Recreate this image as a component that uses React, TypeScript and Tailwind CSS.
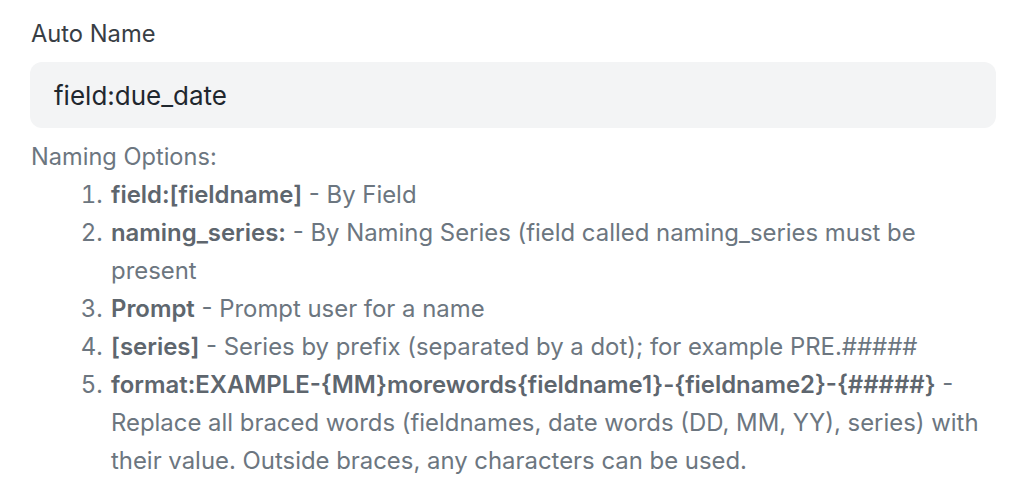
export default function App() {
  const options = [
    { key: 'field:[fieldname]', text: 'By Field' },
    { key: 'naming_series:', text: 'By Naming Series (field called naming_series must be present' },
    { key: 'Prompt', text: 'Prompt user for a name' },
    { key: '[series]', text: 'Series by prefix (separated by a dot); for example PRE.#####' },
    {
      key: 'format:EXAMPLE-{MM}morewords{fieldname1}-{fieldname2}-{#####}',
      text: 'Replace all braced words (fieldnames, date words (DD, MM, YY), series) with their value. Outside braces, any characters can be used.',
    },
  ];

  return (
    <div className="min-h-screen bg-white px-[30px] pt-[20px] font-['Inter',sans-serif] antialiased">
      <div className="w-[966px]">
        <label className="block pl-px text-[23.7px] leading-[28px] text-[#383e45]">Auto Name</label>
        <div className="mt-[14px] flex h-[66px] items-center rounded-[12px] bg-[#f3f4f5] px-[24px] text-[26px] text-[#1f272e]">
          field:due_date
        </div>
        <div className="mt-[10px] pl-px text-[23.9px] leading-[38px] text-[#6c7680]">
          <div className="text-[23.6px]">Naming Options:</div>
          <ol className="list-decimal pl-[78px]">
            {options.map((o) => (
              <li key={o.key} className="pl-[2px]">
                <b className="font-semibold text-[#5e666e]">{o.key}</b> - {o.text}
              </li>
            ))}
          </ol>
        </div>
      </div>
    </div>
  );
}
